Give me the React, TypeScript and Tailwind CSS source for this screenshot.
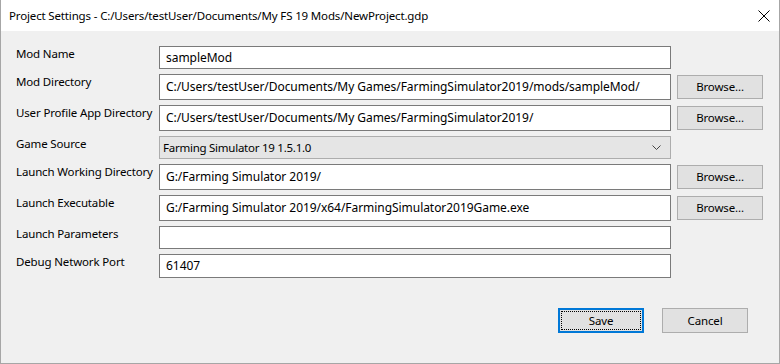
import React from "react";

const font = { fontFamily: '"Segoe UI", "Noto Sans", "Open Sans", sans-serif' };

function Row({
  label,
  value,
  h,
  browse,
  select,
}: {
  label: string;
  value: string;
  h: string;
  browse?: boolean;
  select?: boolean;
}) {
  return (
    <div className={`flex ${h}`}>
      <div className="w-[143px] shrink-0 leading-[16px] whitespace-nowrap">{label}</div>
      {select ? (
        <div className="w-[512px] h-full border border-[#adadad] bg-[#e5e5e5] flex items-center pl-[3px] pr-[8px] justify-between">
          <span className="text-[11.5px] tracking-[-0.25px] whitespace-nowrap">{value}</span>
          <svg width="9" height="5" viewBox="0 0 9 5" className="mr-[1px]">
            <path d="M0.5 0.5 L4.5 4.5 L8.5 0.5" fill="none" stroke="#444" strokeWidth="1" />
          </svg>
        </div>
      ) : (
        <div className="w-[512px] h-full border border-[#7a7a7a] bg-white flex items-center pl-[6px]">
          <span className="whitespace-nowrap text-[12px] tracking-[-0.05px]">{value}</span>
        </div>
      )}
      {browse && (
        <div className="ml-[6px] h-full flex items-center">
          <div className="w-[86px] h-[24px] border border-[#adadad] bg-[#e1e1e1] flex items-center justify-center">
            Browse...
          </div>
        </div>
      )}
    </div>
  );
}

export default function App() {
  return (
    <div
      className="w-[780px] h-[364px] border-l border-r border-b border-[#a6a6a6] bg-[#f0f0f0] flex flex-col text-[11.5px] tracking-[-0.15px] text-black"
      style={font}
    >
      <div className="h-[31px] bg-white flex items-center justify-between pl-[8px] shrink-0">
        <span className="whitespace-nowrap">
          Project Settings - C:/Users/testUser/Documents/My FS 19 Mods/NewProject.gdp
        </span>
        <svg width="12" height="12" viewBox="0 0 12 12" className="mr-[9px]">
          <path d="M0.5 0.5 L11.5 11.5 M11.5 0.5 L0.5 11.5" stroke="#000" strokeWidth="1" />
        </svg>
      </div>
      <div className="flex flex-col gap-[5px] pt-[15px] pl-[15px]">
        <Row label="Mod Name" value="sampleMod" h="h-[23px]" />
        <Row
          label="Mod Directory"
          value="C:/Users/testUser/Documents/My Games/FarmingSimulator2019/mods/sampleMod/"
          h="h-[26px]"
          browse
        />
        <Row
          label="User Profile App Directory"
          value="C:/Users/testUser/Documents/My Games/FarmingSimulator2019/"
          h="h-[26px]"
          browse
        />
        <Row label="Game Source" value="Farming Simulator 19 1.5.1.0" h="h-[23px]" select />
        <Row label="Launch Working Directory" value="G:/Farming Simulator 2019/" h="h-[26px]" browse />
        <Row
          label="Launch Executable"
          value="G:/Farming Simulator 2019/x64/FarmingSimulator2019Game.exe"
          h="h-[26px]"
          browse
        />
        <Row label="Launch Parameters" value="" h="h-[23px]" />
        <Row label="Debug Network Port" value="61407" h="h-[24px]" />
      </div>
      <div className="flex mt-[30px] pl-[557px] gap-[18px]">
        <div className="relative w-[86px] h-[25px] border-2 border-[#0078d7] bg-[#e1e1e1] flex items-center justify-center">
          <span className="absolute inset-[1px] border border-dotted border-black" />
          Save
        </div>
        <div className="w-[86px] h-[25px] border border-[#adadad] bg-[#e1e1e1] flex items-center justify-center">
          Cancel
        </div>
      </div>
    </div>
  );
}
